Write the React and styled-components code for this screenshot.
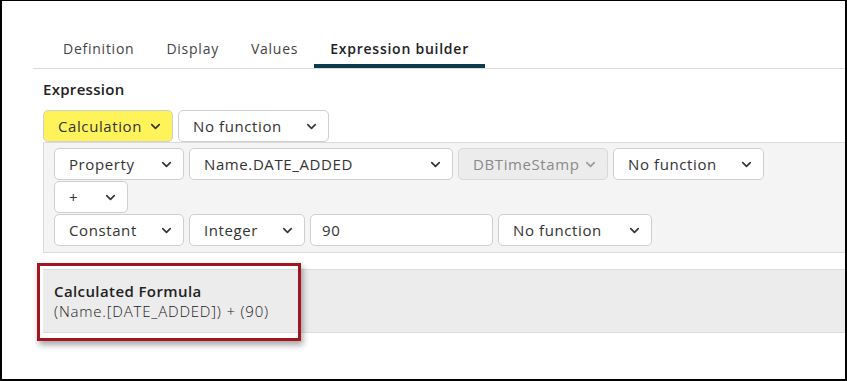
import React from "react";
import styled, { createGlobalStyle } from "styled-components";
import { ChevronDown } from "lucide-react";

const GlobalStyle = createGlobalStyle`
  html, body {
    margin: 0;
    padding: 0;
    background: #fff;
  }
  body {
    font-family: "Open Sans", "Noto Sans", Arial, sans-serif;
    color: #333;
  }
`;

const Frame = styled.div`
  position: relative;
  box-sizing: border-box;
  width: 847px;
  height: 381px;
  border-style: solid;
  border-color: #000;
  border-width: 1px 2px 2px 2px;
  overflow: hidden;
  background: #fff;
`;

const TabBar = styled.div`
  display: flex;
  margin: 31px 0 0 31px;
  padding-left: 14px;
  border-bottom: 1px solid #dcdcdc;
`;

const Tab = styled.div`
  height: 32px;
  display: flex;
  align-items: center;
  padding: 0 16px;
  font-size: 14px;
  letter-spacing: ${(p) => (p.active ? "0.75px" : "0.75px")};
  color: ${(p) => (p.active ? "#222" : "#444")};
  font-weight: ${(p) => (p.active ? 600 : 400)};
  border-bottom: 4px solid ${(p) => (p.active ? "#0d3b4a" : "transparent")};
`;

const Body = styled.div`
  padding-left: 41px;
`;

const Label = styled.div`
  margin-top: 10px;
  height: 20px;
  line-height: 20px;
  font-size: 15px;
  font-weight: 600;
  letter-spacing: 0.3px;
  color: #222;
`;

const Row = styled.div`
  display: flex;
  gap: 5px;
  margin-top: ${(p) => p.top || 0}px;
`;

const SelectBox = styled.div`
  box-sizing: border-box;
  width: ${(p) => p.w}px;
  height: 32px;
  display: flex;
  align-items: center;
  justify-content: space-between;
  padding: 0 9px 0 14px;
  border: 1px solid ${(p) => (p.disabled ? "#d8d8d8" : "#cfcfcf")};
  border-radius: 5px;
  background: ${(p) => (p.highlight ? "#fff35a" : p.disabled ? "#ececec" : "#fff")};
  color: ${(p) => (p.disabled ? "#8a8a8a" : "#333")};
  font-size: 15px;
  letter-spacing: 0.6px;
  white-space: nowrap;
  svg {
    color: ${(p) => (p.disabled ? "#9a9a9a" : "#333")};
    flex-shrink: 0;
  }
`;

const Input = styled.div`
  box-sizing: border-box;
  width: ${(p) => p.w}px;
  height: 32px;
  display: flex;
  align-items: center;
  padding: 0 11px;
  border: 1px solid #cfcfcf;
  border-radius: 5px;
  background: #fff;
  font-size: 15px;
  letter-spacing: 0.6px;
  color: #333;
`;

const OperandBox = styled.div`
  display: flex;
  flex-direction: column;
  gap: 1px;
  padding: 5px 10px 6px;
  background: #f4f4f4;
  border: 1px solid #dcdcdc;
  border-right: none;
`;

const FormulaPanel = styled.div`
  margin-top: 16px;
  height: 64px;
  box-sizing: border-box;
  padding: 11px 11px;
  background: #ececec;
  border-top: 1px solid #dcdcdc;
  border-bottom: 1px solid #dcdcdc;
`;

const FormulaTitle = styled.div`
  font-size: 15px;
  font-weight: 600;
  letter-spacing: 0.4px;
  color: #222;
  line-height: 20px;
`;

const FormulaText = styled.div`
  font-size: 15px;
  font-weight: 300;
  letter-spacing: 0.8px;
  color: #222;
  line-height: 20px;
`;

const Highlight = styled.div`
  position: absolute;
  left: 35px;
  top: 262px;
  width: 264px;
  height: 78px;
  box-sizing: border-box;
  border: 3px solid #a3161f;
  box-shadow: 2px 4px 6px rgba(0, 0, 0, 0.35);
`;

const Select = ({ w, children, ...rest }) => (
  <SelectBox w={w} {...rest}>
    <span>{children}</span>
    <ChevronDown size={15} strokeWidth={2.6} />
  </SelectBox>
);

export default function App() {
  return (
    <>
      <GlobalStyle />
      <Frame>
        <TabBar>
          <Tab>Definition</Tab>
          <Tab>Display</Tab>
          <Tab>Values</Tab>
          <Tab active>Expression builder</Tab>
        </TabBar>
        <Body>
          <Label>Expression</Label>
          <Row top={11}>
            <Select w={130} highlight>Calculation</Select>
            <Select w={151}>No function</Select>
          </Row>
          <OperandBox>
            <Row>
              <Select w={130}>Property</Select>
              <Select w={264}>Name.DATE_ADDED</Select>
              <Select w={150} disabled>DBTimeStamp</Select>
              <Select w={151}>No function</Select>
            </Row>
            <Row>
              <Select w={74}>+</Select>
            </Row>
            <Row>
              <Select w={130}>Constant</Select>
              <Select w={116}>Integer</Select>
              <Input w={183}>90</Input>
              <Select w={154}>No function</Select>
            </Row>
          </OperandBox>
          <FormulaPanel>
            <FormulaTitle>Calculated Formula</FormulaTitle>
            <FormulaText>(Name.[DATE_ADDED]) + (90)</FormulaText>
          </FormulaPanel>
        </Body>
        <Highlight />
      </Frame>
    </>
  );
}
